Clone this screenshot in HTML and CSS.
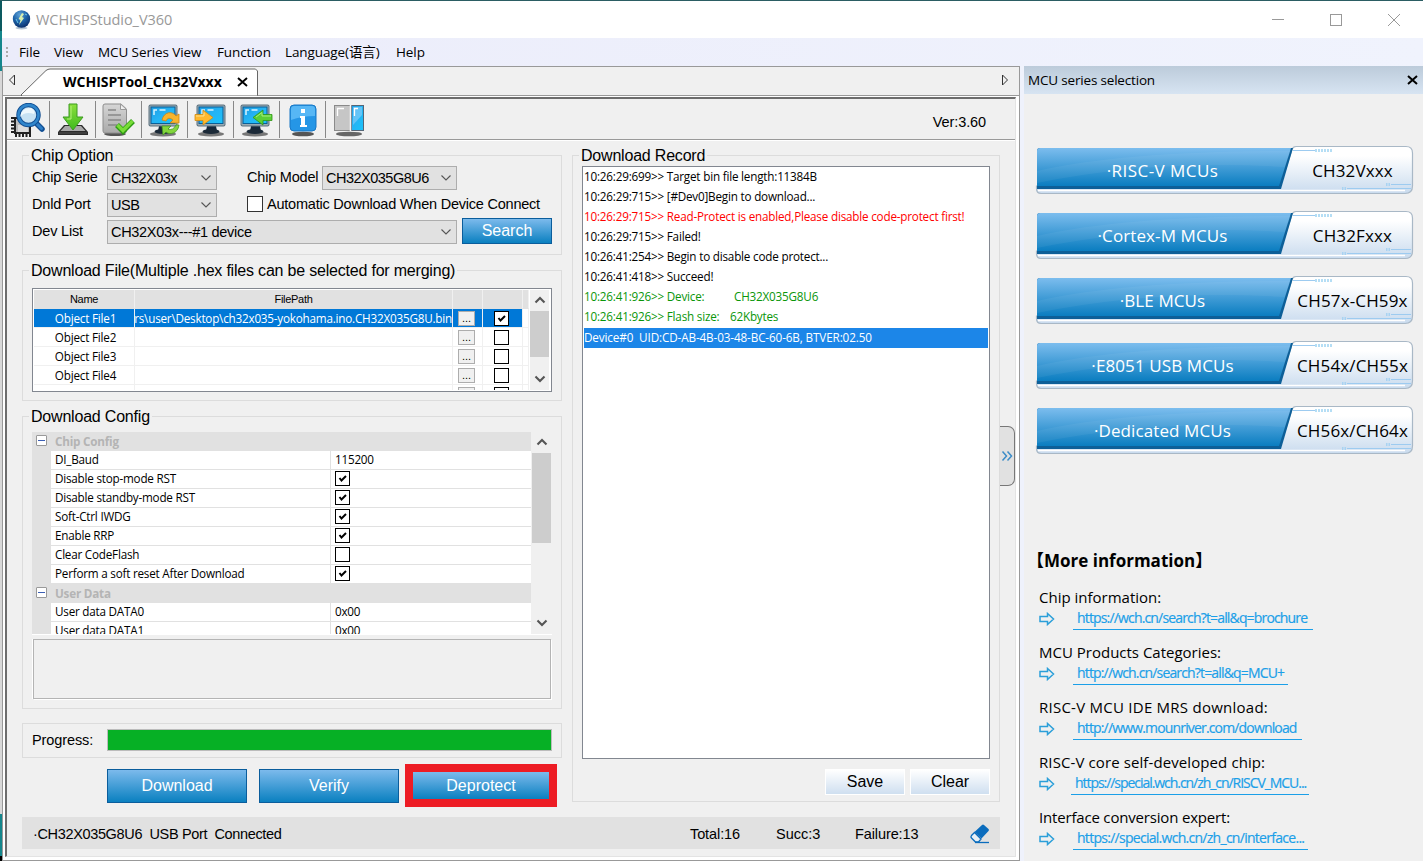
FILE: index.html
```html
<!DOCTYPE html>
<html lang="en">
<head>
    <meta charset="UTF-8">
    <meta name="viewport" content="width=device-width, initial-scale=1.0">
    <title>WCHISPStudio_V360</title>
    <link rel="stylesheet" href="styles.css">
</head>
<body>
    <!-- shared shapes -->
    <svg class="defs" width="0" height="0">
        <defs>
            <linearGradient id="blue" x1="0" y1="0" x2="0" y2="1">
                <stop offset="0" stop-color="#7cbdee"/>
                <stop offset="1" stop-color="#0a7dc0"/>
            </linearGradient>
            <linearGradient id="pale" x1="0" y1="0" x2="0" y2="1">
                <stop offset="0.2" stop-color="#ffffff"/>
                <stop offset="1" stop-color="#c9dbee"/>
            </linearGradient>
            <linearGradient id="screen" x1="0" y1="0" x2="1" y2="1">
                <stop offset="0" stop-color="#1d9de4"/>
                <stop offset="0.5" stop-color="#25b4f4"/>
                <stop offset="1" stop-color="#19c3fb"/>
            </linearGradient>
            <linearGradient id="green" x1="0" y1="0" x2="0" y2="1">
                <stop offset="0" stop-color="#8be03c"/>
                <stop offset="1" stop-color="#3fba1e"/>
            </linearGradient>
            <linearGradient id="paper" x1="0" y1="0" x2="0" y2="1">
                <stop offset="0" stop-color="#d6d6d6"/>
                <stop offset="1" stop-color="#a9a9a9"/>
            </linearGradient>
            <radialGradient id="globe" cx="0.4" cy="0.25" r="0.8">
                <stop offset="0" stop-color="#5fa3d8"/>
                <stop offset="0.5" stop-color="#1d62a8"/>
                <stop offset="1" stop-color="#0a2b66"/>
            </radialGradient>
            <symbol id="monitor" viewBox="0 0 34 34">
                <ellipse cx="17" cy="31" rx="13" ry="2.500" fill="#777"/>
                <path d="M13 23h9l1 5H12z" fill="#16283a"/>
                <ellipse cx="17" cy="28.500" rx="8.500" ry="2.500" fill="#1c2a38"/>
                <rect x="2.500" y="1.500" width="29" height="22" rx="2" fill="#5c707e"/>
                <rect x="3.500" y="2.500" width="27" height="20" rx="1" fill="#9aabb4"/>
                <rect x="5" y="4" width="24" height="16.500" fill="url(#screen)" stroke="#0b5f96"/>
                <path d="M8 12V7h3M13.500 7h6" fill="none" stroke="#d8f3ff" stroke-width="1.500"/>
            </symbol>
            <symbol id="series" viewBox="0 0 380 50">
                <path d="M257 4.500Q258 1.500 261 1.500H371Q377.500 1.500 377.500 8V41Q377.500 48.500 370 48.500H6Q1.500 48.500 1.500 43.500V41H245z" fill="url(#pale)" stroke="#a9b8c6" stroke-width="1.200"/>
                <path d="M3 45.500H370" stroke="#fff" stroke-width="1.500"/>
                <path d="M2 6Q2 3 5 3H258L246 44H2z" fill="#0d5f98"/>
                <path d="M2 6Q2 3 5 3H256L244 41H2z" fill="url(#blue)"/>
                <path d="M2 26Q90 6 256 6L250 22Q120 14 2 38z" fill="#fff" opacity="0.05"/>
                <path d="M258 5.500H280M312 43.500H376M356 39.500H376" stroke="#9dcbf0" fill="none"/>
                <path d="M280 5.500H297" stroke="#b5def5" stroke-width="3" stroke-dasharray="2 1"/>
                <path d="M307 43.500H311M351 39.500H355" stroke="#a8d3f2" stroke-width="3" stroke-dasharray="1.500 1"/>
            </symbol>
            <symbol id="arrow" viewBox="0 0 16 14">
                <path d="M1 4.500H8.500V1.500L14.500 7L8.500 12.500V9.500H1z" fill="none" stroke="#2b9fd9" stroke-width="1.500"/>
            </symbol>
            <symbol id="down" viewBox="0 0 10 6">
                <path d="M0.500 0.500L5 5L9.500 0.500" fill="none" stroke="#555" stroke-width="1.100"/>
            </symbol>
            <symbol id="scroll-up" viewBox="0 0 12 8">
                <path d="M1.500 6.500L6 2L10.500 6.500" fill="none" stroke="#555" stroke-width="2.100"/>
            </symbol>
            <symbol id="scroll-down" viewBox="0 0 12 8">
                <path d="M1.500 1.500L6 6L10.500 1.500" fill="none" stroke="#555" stroke-width="2.100"/>
            </symbol>
            <symbol id="tick" viewBox="0 0 15 15">
                <path d="M4.500 7L6.500 9.500L11 5" fill="none" stroke="#000" stroke-width="2"/>
            </symbol>
        </defs>
    </svg>

    <div class="desktop-edge"></div>

    <div class="window">
        <header class="titlebar">
            <svg class="logo" width="19" height="20" viewBox="0 0 19 20">
                <ellipse cx="9.500" cy="18" rx="6" ry="1.500" fill="#b4c4d4"/>
                <circle cx="9.500" cy="9" r="8.700" fill="url(#globe)"/>
                <path d="M10 3l2 1-2 3 2 1-5 7 1.500-5-2-1z" fill="#d9efb0"/>
                <path d="M4 9l2 4M13 4l2 1" stroke="#69c7e8"/>
            </svg>
            <span class="title">WCHISPStudio_V360</span>
            <div class="caption-buttons">
                <svg width="14" height="14" viewBox="0 0 14 14"><path d="M1 6.500H13" stroke="#999"/></svg>
                <svg width="14" height="14" viewBox="0 0 14 14"><rect x="1.500" y="1.500" width="11" height="11" fill="none" stroke="#999"/></svg>
                <svg width="14" height="14" viewBox="0 0 14 14"><path d="M1 1L13 13M13 1L1 13" stroke="#999"/></svg>
            </div>
        </header>

        <nav class="menubar">
            <i class="grip"></i>
            <span class="m1">File</span>
            <span class="m2">View</span>
            <span class="m3">MCU Series View</span>
            <span class="m4">Function</span>
            <span class="m5">Language(语言)</span>
            <span class="m6">Help</span>
        </nav>

        <div class="main">
            <section class="doc">
                <div class="tabstrip">
                    <svg class="tab-left" width="8" height="12" viewBox="0 0 8 12"><path d="M6.500 1V11L1.500 6z" fill="none" stroke="#333"/></svg>
                    <div class="tab">
                        <svg class="tab-shape" width="237" height="28" viewBox="0 0 237 28"><path d="M0 27.500L25 3Q27 1.500 29 1.500H234.500L236.500 3.500V28H0" fill="#fff" stroke="#666"/><path d="M1 27.500H236" stroke="#fff"/></svg>
                        <b>WCHISPTool_CH32Vxxx</b>
                        <svg class="tab-close" width="11" height="10" viewBox="0 0 11 10"><path d="M1 1L10 9M10 1L1 9" stroke="#000" stroke-width="1.900"/></svg>
                    </div>
                    <svg class="tab-right" width="8" height="12" viewBox="0 0 8 12"><path d="M1.500 1V11L6.500 6z" fill="none" stroke="#333"/></svg>
                </div>

                <div class="frame">
                    <div class="toolbar">
                        <div class="tool first">
                            <svg width="34" height="34" viewBox="0 0 34 34">
                                <rect x="4" y="15" width="15" height="15" fill="#bbb" stroke="#222" stroke-width="2"/>
                                <path d="M1.500 14V30M4 32.500H20" stroke="#222" stroke-width="3" stroke-dasharray="2 1.500"/>
                                <rect x="7" y="22" width="10" height="7" fill="#ddd"/>
                                <path d="M25 20L31 26" stroke="#124f93" stroke-width="5.500" stroke-linecap="round"/>
                                <path d="M26 21L30.500 25.500" stroke="#2c7ec8" stroke-width="3" stroke-linecap="round"/>
                                <circle cx="17.500" cy="12" r="10" fill="#c7e2f3" stroke="#124f93" stroke-width="4.500"/>
                                <circle cx="17.500" cy="12" r="10" fill="none" stroke="#2f86cc" stroke-width="2.500"/>
                                <path d="M9 14Q10 5 20 5Q25 8 23 11Q14 8 9 14z" fill="#eef8fd"/>
                            </svg>
                        </div>
                        <div class="tool">
                            <svg width="34" height="34" viewBox="0 0 34 34">
                                <path d="M8 22H26L32 29V32H2V29z" fill="#2c2c2c"/>
                                <path d="M9 23H25L29.500 28H4.500z" fill="#a8a8a8"/>
                                <path d="M3 30H31" stroke="#555"/>
                                <path d="M13 1H21V14H27L17 27L7 14H13z" fill="url(#green)" stroke="#3c9b20"/>
                                <path d="M15 3V16H11" fill="none" stroke="#b5f07a"/>
                            </svg>
                        </div>
                        <div class="tool">
                            <svg width="34" height="34" viewBox="0 0 34 34">
                                <ellipse cx="13" cy="31" rx="11" ry="2" fill="#555"/>
                                <path d="M1 3Q1 1 3 1H19L24.500 6V28Q24.500 30 22 30H3Q1 30 1 28z" fill="url(#paper)" stroke="#8d8d8d"/>
                                <path d="M18.500 1V6.500H24.500z" fill="#efefef" stroke="#999"/>
                                <path d="M6 7H14M6 12H19M6 17H19M6 22H15" stroke="#888" stroke-width="1.500"/>
                                <path d="M15 22L21 28L31 18" fill="none" stroke="#2c9a12" stroke-width="5.500"/>
                                <path d="M15.500 22L21 27.500L30.500 18" fill="none" stroke="#78dc38" stroke-width="3.500"/>
                            </svg>
                        </div>
                        <div class="tool">
                            <svg width="34" height="34" viewBox="0 0 34 34">
                                <use href="#monitor" x="-2" width="34" height="34"/>
                                <path d="M14 17C16 8 25 8 28 13L31 11V20H22L25 17Q20 13 18 18z" fill="#f8b42c" stroke="#c98514" stroke-width="0.800"/>
                                <path d="M31 22C30 31 21 32 18 29L15 32L14 23H23L20 26Q25 28 28 22z" fill="#83d63d" stroke="#469b22" stroke-width="0.800"/>
                            </svg>
                        </div>
                        <div class="tool">
                            <svg width="34" height="34" viewBox="0 0 34 34">
                                <use href="#monitor" width="34" height="34"/>
                                <path d="M1 11.500H9V7L19 14.500L9 22V17.500H1z" fill="#ffb92e" stroke="#d18b12" stroke-width="0.800"/>
                                <path d="M2 13H10V9.500" fill="none" stroke="#ffe08d"/>
                            </svg>
                        </div>
                        <div class="tool">
                            <svg width="34" height="34" viewBox="0 0 34 34">
                                <use href="#monitor" x="-2" width="34" height="34"/>
                                <path d="M32 11.500H23V7L13 14.500L23 22V17.500H32z" fill="#5bcf35" stroke="#2e9515" stroke-width="0.800"/>
                                <path d="M31 13H22V9.500L16 14" fill="none" stroke="#a6ee80"/>
                            </svg>
                        </div>
                        <div class="tool">
                            <svg width="34" height="34" viewBox="0 0 34 34">
                                <ellipse cx="17" cy="31" rx="11" ry="2.300" fill="#555"/>
                                <rect x="4" y="2" width="26" height="26" rx="4" fill="#2596e6" stroke="#1877c4"/>
                                <path d="M5 6Q5 3 8 3H26Q29 3 29 6V13Q16 13 5 17z" fill="#6cc4fb" opacity="0.700"/>
                                <path d="M15 6h4v4h-4zM14 13h5v9h2v2h-7v-2h1v-7h-1z" fill="#fff"/>
                            </svg>
                        </div>
                        <div class="tool last">
                            <svg width="34" height="34" viewBox="0 0 34 34">
                                <ellipse cx="17" cy="31" rx="13" ry="2.300" fill="#666"/>
                                <rect x="2.500" y="2.500" width="29" height="25" fill="#c6c6c6" stroke="#8a8a8a"/>
                                <rect x="19.500" y="2.500" width="12" height="25" fill="url(#screen)" stroke="#567"/>
                                <path d="M21 4h9v8L21 22z" fill="#8fd0fa" opacity="0.600"/>
                                <path d="M18.500 2V28" stroke="#f4f4f4" stroke-width="1.500"/>
                                <path d="M5.500 13V5.500H12M22.500 13V5.500H26" stroke="#fff" fill="none" stroke-width="1.300"/>
                            </svg>
                        </div>
                        <span class="version">Ver:3.60</span>
                    </div>

                    <div class="content">
                        <div class="columns">
                            <div class="left">
                                <fieldset class="chip-option">
                                    <legend>Chip Option</legend>
                                    <div class="row">
                                        <label>Chip Serie</label>
                                        <div class="select small">CH32X03x<svg width="10" height="6"><use href="#down"/></svg></div>
                                        <label class="model-label">Chip Model</label>
                                        <div class="select model">CH32X035G8U6<svg width="10" height="6"><use href="#down"/></svg></div>
                                    </div>
                                    <div class="row">
                                        <label>Dnld Port</label>
                                        <div class="select small">USB<svg width="10" height="6"><use href="#down"/></svg></div>
                                        <i class="auto-box"></i>
                                        <span class="auto-label">Automatic Download When Device Connect</span>
                                    </div>
                                    <div class="row">
                                        <label>Dev List</label>
                                        <div class="select wide">CH32X03x---#1 device<svg width="10" height="6"><use href="#down"/></svg></div>
                                        <button class="blue search">Search</button>
                                    </div>
                                </fieldset>

                                <fieldset class="download-file">
                                    <legend>Download File(Multiple .hex files can be selected for merging)</legend>
                                    <div class="file-box">
                                        <div class="file-table">
                                            <div class="file-row head"><span>Name</span><span>FilePath</span><span></span><span></span><span></span></div>
                                            <div class="file-row selected"><span>Object File1</span><span class="path">rs\user\Desktop\ch32x035-yokohama.ino.CH32X035G8U.bin</span><span><button class="dots">...</button></span><span><i class="check"><svg width="15" height="15"><use href="#tick"/></svg></i></span><span></span></div>
                                            <div class="file-row"><span>Object File2</span><span></span><span><button class="dots">...</button></span><span><i class="check"></i></span><span></span></div>
                                            <div class="file-row"><span>Object File3</span><span></span><span><button class="dots">...</button></span><span><i class="check"></i></span><span></span></div>
                                            <div class="file-row"><span>Object File4</span><span></span><span><button class="dots">...</button></span><span><i class="check"></i></span><span></span></div>
                                            <div class="file-row"><span></span><span></span><span><button class="dots"></button></span><span><i class="check"></i></span><span></span></div>
                                        </div>
                                        <div class="scrollbar">
                                            <svg width="12" height="8"><use href="#scroll-up"/></svg>
                                            <div class="thumb"></div>
                                            <svg width="12" height="8"><use href="#scroll-down"/></svg>
                                        </div>
                                    </div>
                                </fieldset>

                                <fieldset class="download-config">
                                    <legend>Download Config</legend>
                                    <div class="config-box">
                                        <div class="config">
                                            <div class="config-head"><i class="minus"></i><b>Chip Config</b></div>
                                            <div class="config-row"><span>DI_Baud</span><span>115200</span></div>
                                            <div class="config-row"><span>Disable stop-mode RST</span><span><i class="check"><svg width="15" height="15"><use href="#tick"/></svg></i></span></div>
                                            <div class="config-row"><span>Disable standby-mode RST</span><span><i class="check"><svg width="15" height="15"><use href="#tick"/></svg></i></span></div>
                                            <div class="config-row"><span>Soft-Ctrl IWDG</span><span><i class="check"><svg width="15" height="15"><use href="#tick"/></svg></i></span></div>
                                            <div class="config-row"><span>Enable RRP</span><span><i class="check"><svg width="15" height="15"><use href="#tick"/></svg></i></span></div>
                                            <div class="config-row"><span>Clear CodeFlash</span><span><i class="check"></i></span></div>
                                            <div class="config-row"><span>Perform a soft reset After Download</span><span><i class="check"><svg width="15" height="15"><use href="#tick"/></svg></i></span></div>
                                            <div class="config-head"><i class="minus"></i><b>User Data</b></div>
                                            <div class="config-row"><span>User data DATA0</span><span>0x00</span></div>
                                            <div class="config-row"><span>User data DATA1</span><span>0x00</span></div>
                                        </div>
                                        <div class="scrollbar">
                                            <svg width="12" height="8"><use href="#scroll-up"/></svg>
                                            <div class="thumb"></div>
                                            <svg width="12" height="8"><use href="#scroll-down"/></svg>
                                        </div>
                                    </div>
                                    <div class="description"></div>
                                </fieldset>

                                <div class="progress">
                                    <span>Progress:</span>
                                    <div class="bar"></div>
                                </div>

                                <div class="actions">
                                    <button class="blue">Download</button>
                                    <button class="blue">Verify</button>
                                    <div class="highlight"><button class="blue">Deprotect</button></div>
                                </div>
                            </div>

                            <fieldset class="record">
                                <legend>Download Record</legend>
                                <div class="log">
                                    <p>10:26:29:699&gt;&gt; Target bin file length:11384B</p>
                                    <p>10:26:29:715&gt;&gt; [#Dev0]Begin to download...</p>
                                    <p class="red">10:26:29:715&gt;&gt; Read-Protect is enabled,Please disable code-protect first!</p>
                                    <p>10:26:29:715&gt;&gt; Failed!</p>
                                    <p>10:26:41:254&gt;&gt; Begin to disable code protect...</p>
                                    <p>10:26:41:418&gt;&gt; Succeed!</p>
                                    <p class="green"><span class="dev">10:26:41:926&gt;&gt; Device:</span>CH32X035G8U6</p>
                                    <p class="green"><span class="size">10:26:41:926&gt;&gt; Flash size:</span>62Kbytes</p>
                                    <p class="current">Device#0&nbsp; UID:CD-AB-4B-03-48-BC-60-6B, BTVER:02.50</p>
                                </div>
                                <div class="log-buttons">
                                    <button>Save</button>
                                    <button>Clear</button>
                                </div>
                            </fieldset>

                            <div class="expander">
                                <svg width="12" height="12" viewBox="0 0 12 12"><path d="M1.500 1.500L5.500 6L1.500 10.500M6.500 1.500L10.500 6L6.500 10.500" fill="none" stroke="#3c8cc8" stroke-width="1.500"/></svg>
                            </div>
                        </div>

                        <footer class="status">
                            <span class="device">·CH32X035G8U6&nbsp; USB Port&nbsp; Connected</span>
                            <span class="total">Total:16</span>
                            <span class="succ">Succ:3</span>
                            <span class="failure">Failure:13</span>
                            <svg width="20" height="20" viewBox="0 0 20 20">
                                <path d="M12 1Q13 0 14 1L18.500 5Q19.500 6 18.500 7L11.500 14.500L4.500 8z" fill="#0a6cbd"/>
                                <path d="M4.500 8.500L1.500 11.500Q0.500 13 1.500 14L5.500 18H8.500L11 15z" fill="#e8f0f6" stroke="#0a6cbd" stroke-width="1.300"/>
                                <path d="M5 18.500H19" stroke="#0a6cbd" stroke-width="1.300"/>
                            </svg>
                        </footer>
                    </div>
                </div>
            </section>

            <aside class="dock">
                <div class="dock-title">
                    <span>MCU series selection</span>
                    <svg width="11" height="10" viewBox="0 0 11 10"><path d="M1 1L10 9M10 1L1 9" stroke="#000" stroke-width="2"/></svg>
                </div>
                <div class="series-list">
                    <div class="series"><svg width="380" height="50"><use href="#series"/></svg><span class="riscv">·RISC-V MCUs</span><em>CH32Vxxx</em></div>
                    <div class="series"><svg width="380" height="50"><use href="#series"/></svg><span>·Cortex-M MCUs</span><em>CH32Fxxx</em></div>
                    <div class="series"><svg width="380" height="50"><use href="#series"/></svg><span>·BLE MCUs</span><em>CH57x-CH59x</em></div>
                    <div class="series"><svg width="380" height="50"><use href="#series"/></svg><span>·E8051 USB MCUs</span><em>CH54x/CH55x</em></div>
                    <div class="series"><svg width="380" height="50"><use href="#series"/></svg><span>·Dedicated MCUs</span><em>CH56x/CH64x</em></div>
                </div>
                <div class="more">
                    <h2>【More information】</h2>
                    <div class="info">
                        <p class="i1">Chip information:</p>
                        <svg width="16" height="14"><use href="#arrow"/></svg><a class="l1">https://wch.cn/search?t=all&amp;q=brochure</a>
                    </div>
                    <div class="info">
                        <p class="i2">MCU Products Categories:</p>
                        <svg width="16" height="14"><use href="#arrow"/></svg><a class="l2">http://wch.cn/search?t=all&amp;q=MCU+</a>
                    </div>
                    <div class="info">
                        <p class="i3">RISC-V MCU IDE MRS download:</p>
                        <svg width="16" height="14"><use href="#arrow"/></svg><a class="l3">http://www.mounriver.com/download</a>
                    </div>
                    <div class="info">
                        <p class="i4">RISC-V core self-developed chip:</p>
                        <svg width="16" height="14"><use href="#arrow"/></svg><a class="l4">https://special.wch.cn/zh_cn/RISCV_MCU...</a>
                    </div>
                    <div class="info">
                        <p class="i5">Interface conversion expert:</p>
                        <svg width="16" height="14"><use href="#arrow"/></svg><a class="l5">https://special.wch.cn/zh_cn/interface...</a>
                    </div>
                </div>
            </aside>
        </div>
    </div>
</body>
</html>
```
FILE: styles.css
```css
* {
    box-sizing: border-box;
}

body {
    margin: 0;
    width: 1423px;
    height: 861px;
    overflow: hidden;
    display: flex;
    background-color: #f0f0f0;
    border-top: 1px solid #2b5d63;
    font-family: 'Open Sans', 'Noto Sans CJK SC', sans-serif;
    color: #000;
}

p, h2, fieldset, legend {
    margin: 0;
    padding: 0;
}

svg {
    display: block;
    flex: none;
}

.defs {
    position: absolute;
}

/* sliver of the desktop left of the window */
.desktop-edge {
    width: 2px;
    background: linear-gradient(#0c5a60 30px, #15868c 30px, #15868c 70px, #d8d8d8 70px, #d8d8d8 813px, #15868c 813px, #15868c 855px, #000 855px);
}

.window {
    flex: 1;
    display: flex;
    flex-direction: column;
}

/* title bar and menu */
.titlebar {
    height: 37px;
    background-color: #fff;
    display: flex;
    align-items: center;
    padding-left: 10px;
}

.title {
    flex: 1;
    margin-left: 5px;
    font-size: 14.5px;
    letter-spacing: -0.05px;
    color: #999;
}

.caption-buttons {
    display: flex;
    gap: 44px;
    padding-right: 22px;
}

.menubar {
    height: 28px;
    background: linear-gradient(to right, #ebecfa, #f0f3fd);
    display: flex;
    align-items: center;
    font-size: 13.5px;
    letter-spacing: -0.1px;
    white-space: nowrap;
}

.grip {
    width: 2px;
    height: 11px;
    margin: 0 11px 0 4px;
    background: repeating-linear-gradient(#aaa 0 2px, transparent 2px 4px);
}

.m1 { width: 35px; }
.m2 { width: 44px; }
.m3 { width: 119px; }
.m4 { width: 68px; }
.m5 { width: 111px; line-height: 18px; padding-bottom: 1px; }

.main {
    flex: 1;
    display: flex;
    background-color: #eff2fc;
    min-height: 0;
}

/* document area */
.doc {
    width: 1018px;
    border: 1px solid #999;
    background-color: #fff;
    display: flex;
    flex-direction: column;
}

.tabstrip {
    height: 29px;
    background-color: #f0f0f0;
    border-bottom: 1px solid #999;
    display: flex;
    align-items: center;
    padding: 0 10px 0 5px;
}

.tab-left,
.tab-right {
    margin-bottom: 2px;
}

.tab {
    position: relative;
    width: 237px;
    height: 29px;
    margin-left: 5px;
    margin-right: auto;
    display: flex;
    align-items: center;
}

.tab-shape {
    position: absolute;
    left: 0;
    top: 0;
    height: 29px;
}

.tab b {
    position: relative;
    margin: 1px 0 0 42px;
    width: 174px;
    font-size: 14px;
}

.tab-close {
    position: relative;
    margin-top: 1px;
}

.frame {
    flex: 1;
    margin: 1px 3px 3px 2px;
    border: 1px solid #e3e3e3;
    border-left: 2px solid #6d6d6d;
    border-top: 2px solid #6d6d6d;
    background-color: #f0f0f0;
    font-family: 'Liberation Sans', sans-serif;
    display: flex;
    flex-direction: column;
}

.toolbar {
    height: 41px;
    border-bottom: 1px solid #999;
    box-shadow: 0 1px 0 #fff;
    display: flex;
    align-items: center;
}

.tool {
    width: 46px;
    height: 37px;
    border-right: 1px solid #888;
    padding: 2px 0 0 6px;
}

.tool.first {
    width: 43px;
    padding-left: 4px;
}

.tool.last {
    border: none;
}

.version {
    margin: 5px 29px 0 auto;
    font-size: 14.5px;
    letter-spacing: -0.1px;
}

.content {
    padding: 5px 15px 0;
}

.columns {
    display: flex;
    height: 672px;
}

.left {
    width: 540px;
    margin-right: 10px;
}

fieldset {
    border: 1px solid #dcdcdc;
    min-width: 0;
}

legend {
    height: 21px;
    line-height: 21px;
    font-size: 16px;
    letter-spacing: -0.2px;
    margin-left: -3px;
    padding: 0 2px;
    white-space: nowrap;
}

.chip-option {
    height: 110px;
    padding: 0 9px;
    font-size: 14.5px;
}

.row {
    display: flex;
    align-items: center;
    height: 24px;
    margin-bottom: 3px;
    white-space: nowrap;
}

.row label {
    width: 75px;
    padding-bottom: 2px;
    letter-spacing: -0.2px;
}

.row .model-label {
    margin-left: 30px;
}

.select {
    height: 24px;
    border: 1px solid #adadad;
    background-color: #e1e1e1;
    display: flex;
    align-items: center;
    justify-content: space-between;
    padding: 0 5px 0 3px;
    letter-spacing: -0.5px;
}

.small { width: 110px; }
.model { width: 135px; }

.wide {
    width: 350px;
    letter-spacing: -0.3px;
}

.auto-box {
    width: 16px;
    height: 16px;
    border: 1px solid #333;
    background-color: #fff;
    margin: 0 4px 2px 30px;
}

.auto-label {
    padding-bottom: 2px;
    letter-spacing: -0.22px;
}

button {
    font-family: 'Liberation Sans', sans-serif;
    padding: 0;
}

.blue {
    width: 140px;
    height: 34px;
    border: 1px solid #0a5d9c;
    background: linear-gradient(#7cbaec, #0a80c0);
    color: #fff;
    font-size: 16px;
}

.search {
    width: 90px;
    height: 26px;
    margin: 0 0 2px 5px;
}

.download-file {
    margin-top: 5px;
    height: 141px;
    padding: 7px 9px 0;
}

.file-box {
    height: 104px;
    border: 1px solid #828790;
    background-color: #fff;
    display: flex;
    padding: 1px;
}

.file-table {
    flex: 1;
    overflow: hidden;
    height: 100px;
    font-family: 'Open Sans', sans-serif;
    font-size: 11.7px;
    letter-spacing: -0.2px;
}

.file-row {
    display: grid;
    grid-template-columns: 101px 318px 30px 40px 6px;
    height: 19px;
    line-height: 17px;
    text-align: center;
}

.file-row > span {
    border-right: 1px solid #f0f0f0;
    border-bottom: 1px solid #f0f0f0;
    display: flex;
    justify-content: center;
    align-items: center;
    white-space: nowrap;
    overflow: hidden;
}

.file-row > span:first-child {
    padding-left: 3px;
}

.file-row > span:nth-child(3),
.file-row > span:nth-child(4) {
    padding-right: 2px;
}

.file-row.head > span {
    background-color: #e1e1e1;
    border-bottom-color: #e1e1e1;
    font-size: 11px;
    font-family: 'Liberation Sans', sans-serif;
    letter-spacing: -0.3px;
}

.file-row.head > span:first-child {
    padding-left: 0;
}

.file-row.selected > span:not(:last-child) {
    background-color: #0078d7;
    color: #fff;
}

.file-row .path {
    justify-content: flex-end;
    letter-spacing: -0.21px;
}

.dots {
    width: 17px;
    height: 15px;
    border: 1px solid #adadad;
    background-color: #f0f0f0;
    font-size: 11px;
    line-height: 8px;
}

.check {
    display: block;
    width: 15px;
    height: 15px;
    border: 1px solid #000;
    background-color: #fff;
}

.check svg {
    margin: -1px;
}

.scrollbar {
    width: 19px;
    background-color: #f0f0f0;
    display: flex;
    flex-direction: column;
    align-items: center;
    padding: 6px 0 7px;
}

.thumb {
    width: 19px;
    height: 46px;
    margin: 7px 0 auto;
    background-color: #cdcdcd;
}

.file-box .scrollbar {
    margin-right: 1px;
}

.download-config {
    margin-top: 5px;
    height: 303px;
    padding: 5px 9px 0;
}

.config-box {
    height: 203px;
    display: flex;
    border-bottom: 1px solid #fff;
}

.config {
    width: 499px;
    margin-right: 1px;
    overflow: hidden;
    background-color: #e1e1e1;
    font-family: 'Open Sans', sans-serif;
    font-size: 11.7px;
    letter-spacing: -0.22px;
}

.config-head {
    height: 19px;
    display: flex;
    align-items: center;
    color: #b4b4b4;
    padding-bottom: 2px;
}

.minus {
    width: 11px;
    height: 11px;
    margin: 0 8px 0 4px;
    border: 1px solid #999;
    border-radius: 1px;
    background: linear-gradient(#3c5fb4, #3c5fb4) center / 7px 1px no-repeat #fff;
}

.config-row {
    display: grid;
    grid-template-columns: 280px 1fr;
    height: 19px;
    margin-left: 19px;
    line-height: 16px;
    background-color: #fff;
    border-bottom: 1px solid #e1e1e1;
}

.config-row span {
    padding-left: 4px;
}

.config-row span:first-child {
    border-right: 1px solid #e1e1e1;
}

.config-row .check {
    margin-top: 1px;
}

.config-box .thumb {
    height: 90px;
    margin-top: 7px;
}

.description {
    height: 60px;
    margin: 4px 1px 0 1px;
    border: 1px solid #b4b4b4;
    box-shadow: 1px 1px 0 #fff, -1px 0 0 #fff;
}

.progress {
    margin-top: 14px;
    height: 35px;
    border: 1px solid #dcdcdc;
    display: flex;
    align-items: center;
    padding: 0 9px;
    font-size: 14.5px;
}

.progress span {
    width: 75px;
    padding-bottom: 2px;
    letter-spacing: -0.1px;
}

.bar {
    width: 445px;
    height: 22px;
    margin-bottom: 1px;
    border: 1px solid #bcbcbc;
    background-color: #06b025;
}

.actions {
    margin-top: 6px;
    padding-left: 85px;
    display: flex;
    align-items: center;
    height: 43px;
}

.actions .blue {
    margin-right: 12px;
}

/* red frame round the Deprotect button */
.highlight {
    width: 152px;
    height: 43px;
    margin-left: -6px;
    border: 8px solid #ed1c24;
}

.highlight .blue {
    width: 136px;
    height: 27px;
    margin: 0;
    border: none;
    display: block;
}

.record {
    width: 428px;
    height: 657px;
    padding: 0 9px;
}

.log {
    height: 593px;
    width: 408px;
    border: 1px solid #828790;
    background-color: #fff;
    padding: 0 1px;
    font-family: 'Open Sans', sans-serif;
    font-size: 11.7px;
    letter-spacing: -0.2px;
}

.log p {
    height: 20px;
    line-height: 18px;
    white-space: pre;
}

.red { color: #f00; }
.green { color: #0a960a; }

.log span {
    display: inline-block;
}

.dev { width: 150px; }
.size { width: 146px; }

.log .current {
    margin-top: 1px;
    background-color: #1c86e8;
    color: #fff;
    letter-spacing: -0.12px;
}

.log-buttons {
    display: flex;
    justify-content: flex-end;
    gap: 5px;
    margin: 10px 0 0;
}

.log-buttons button {
    width: 80px;
    height: 26px;
    border: 1px solid #fff;
    background: linear-gradient(#fff, #cfdff0);
    font-size: 16px;
}

.expander {
    width: 15px;
    height: 60px;
    margin: 281px -15px 0 0;
    border: 1px solid #777;
    border-left: none;
    border-radius: 0 7px 7px 0;
    background-color: #e1e1e1;
    display: flex;
    align-items: center;
    padding-left: 1px;
}

.status {
    height: 32px;
    width: 978px;
    background-color: #e1e1e1;
    display: flex;
    align-items: center;
    padding: 2px 10px 0 11px;
    font-size: 14.5px;
    white-space: nowrap;
}

.device {
    width: 657px;
    letter-spacing: -0.35px;
}

.total { width: 86px; }
.succ { width: 79px; }
.failure { width: 115px; }

.total,
.failure {
    letter-spacing: -0.1px;
}

/* docked panel on the right */
.dock {
    flex: 1;
    margin-left: 4px;
    background-color: #f0f0f0;
}

.dock-title {
    height: 28px;
    background: linear-gradient(#bccbda, #d7e4f2);
    display: flex;
    align-items: center;
    justify-content: space-between;
    padding: 0 5px 0 4px;
    font-size: 13.5px;
    letter-spacing: -0.18px;
}

.series-list {
    padding: 51px 0 0 11px;
}

.series {
    position: relative;
    width: 380px;
    height: 50px;
    margin-bottom: 15px;
    display: flex;
    align-items: center;
}

.series svg {
    position: absolute;
    left: 0;
    top: 0;
}

.series span,
.series em {
    position: relative;
    font-style: normal;
    text-align: center;
    white-space: nowrap;
}

.series span {
    width: 257px;
    color: #fff;
    font-size: 17px;
    letter-spacing: 0.1px;
}

.series .riscv {
    letter-spacing: 0.45px;
}

.series em {
    width: 126px;
    font-size: 17px;
    letter-spacing: 0.15px;
}

.more {
    padding: 79px 0 0 15px;
}

.more h2 {
    font-size: 17px;
    line-height: 24px;
    letter-spacing: 0;
    margin: 0 0 13px -12px;
}

.info {
    display: flex;
    flex-wrap: wrap;
    align-content: flex-start;
    height: 55px;
    white-space: nowrap;
}

.info p {
    width: 100%;
    height: 22px;
    line-height: 22px;
    font-size: 15px;
}

.i3 { letter-spacing: 0.25px; }
.i4 { letter-spacing: 0.1px; }
.info .i5 { letter-spacing: -0.18px; }

.info svg {
    margin: 4px 18px 0 0;
}

.info a {
    height: 22px;
    line-height: 19px;
    padding-left: 4px;
    border-bottom: 1px solid #1b9fe8;
    color: #1b9fe8;
    font-size: 14px;
    letter-spacing: -0.84px;
    -webkit-text-stroke: 0.2px #1b9fe8;
}

.l1 { width: 240px; }
.l2 { width: 215px; }
.l3 { width: 229px; }
.info .l4 { width: 238px; margin-left: -2px; letter-spacing: -1.05px; }
.info .l5 { width: 235px; letter-spacing: -0.72px; }
```
